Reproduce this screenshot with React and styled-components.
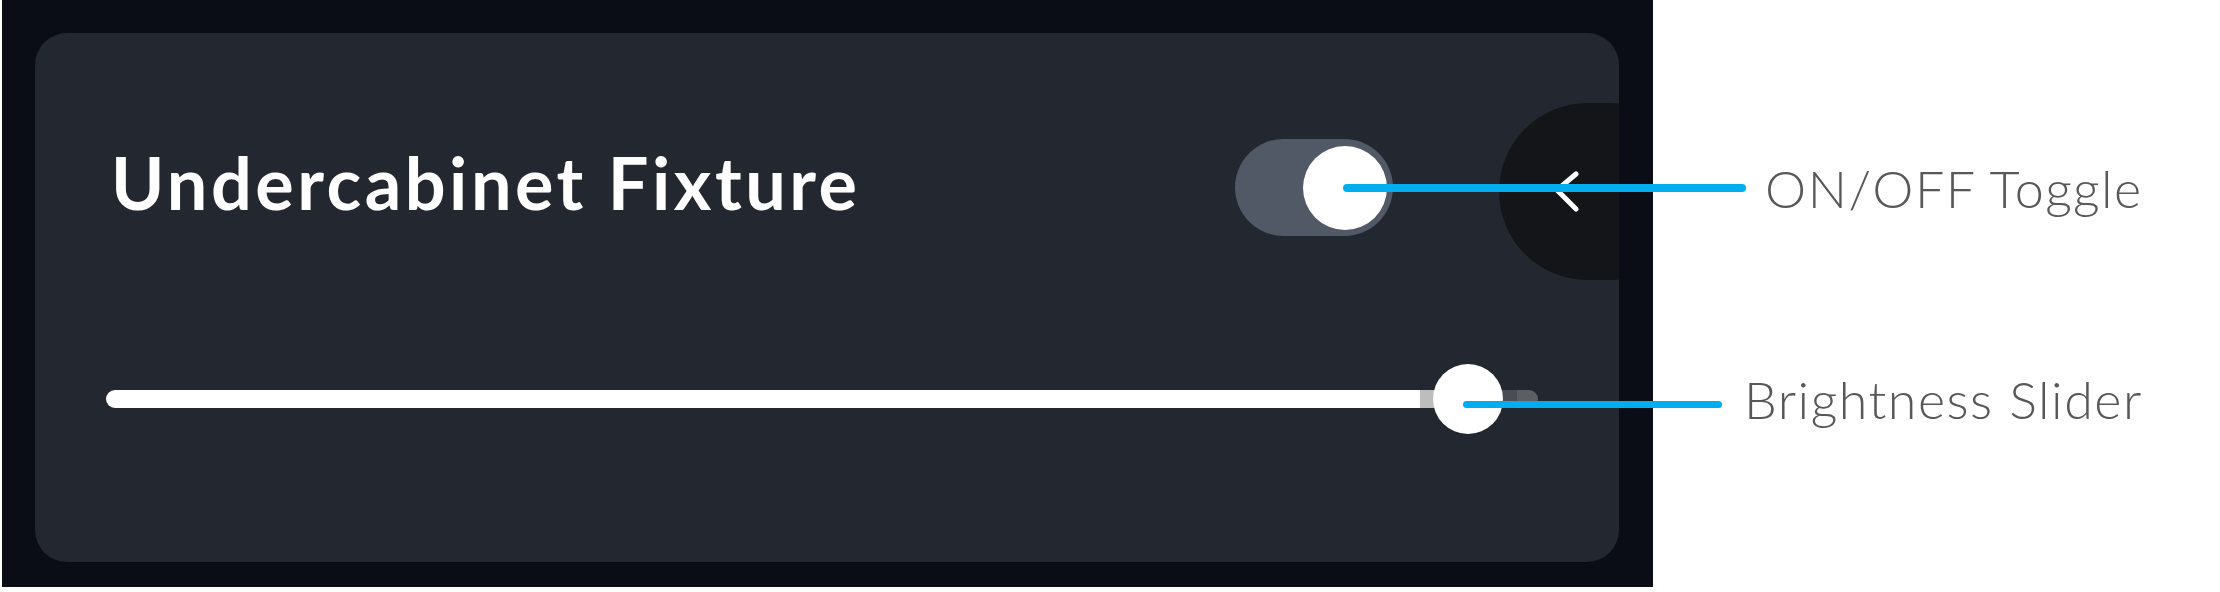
import React from 'react';
import styled, { createGlobalStyle } from 'styled-components';

const GlobalStyle = createGlobalStyle`
  html, body {
    margin: 0;
    padding: 0;
    background: #ffffff;
  }
  * {
    box-sizing: border-box;
  }
`;

export default function App() {
  const value = 0.951;

  return (
    <Page>
      <GlobalStyle />
      <Screen>
        <Card>
          <Header>
            <Title>Undercabinet Fixture</Title>
            <Toggle $on>
              <Knob />
            </Toggle>
          </Header>
          <SliderRow>
            <Track>
              <Thumb style={{ left: `${value * 100}%` }} />
            </Track>
          </SliderRow>
          <BackTab>
            <svg width="28" height="44" viewBox="0 0 28 44" fill="none">
              <polyline
                points="22,4 3,20 22,39"
                stroke="#ffffff"
                strokeWidth="5"
                strokeLinecap="round"
                strokeLinejoin="round"
              />
            </svg>
          </BackTab>
        </Card>
      </Screen>

      <Callout $top={163} $left={1343} $gap={19}>
        <Leader $width={403} $thick={8} />
        <Label>ON/OFF Toggle</Label>
      </Callout>
      <Callout $top={379} $left={1463} $gap={22}>
        <Leader $width={259} $thick={7} />
        <Label $lift={5}>Brightness Slider</Label>
      </Callout>
    </Page>
  );
}

const Page = styled.div`
  position: relative;
  display: flex;
  width: 2220px;
  height: 592px;
  background: #ffffff;
  overflow: hidden;
`;

const Screen = styled.div`
  display: flex;
  width: 1651px;
  height: 587px;
  margin-left: 2px;
  padding: 33px 34px 25px 33px;
  background: #0a0d15;
`;

const Card = styled.div`
  position: relative;
  flex: 1;
  display: flex;
  flex-direction: column;
  background: #23272f;
  border-radius: 32px;
  overflow: hidden;
`;

const Header = styled.div`
  display: flex;
  align-items: center;
  height: 97px;
  margin-top: 106px;
  padding: 0 226px 0 76px;
`;

const Title = styled.h1`
  flex: 1;
  margin: 0;
  padding-bottom: 12px;
  font-family: 'Lato', 'Liberation Sans', sans-serif;
  font-weight: 700;
  font-size: 72px;
  line-height: 1;
  letter-spacing: 3.5px;
  color: #ffffff;
`;

const Toggle = styled.div`
  display: flex;
  align-items: center;
  justify-content: ${(p) => (p.$on ? 'flex-end' : 'flex-start')};
  width: 158px;
  height: 97px;
  padding: 0 6px;
  border-radius: 49px;
  background: #525966;
`;

const Knob = styled.div`
  width: 84px;
  height: 84px;
  border-radius: 50%;
  background: #ffffff;
`;

const SliderRow = styled.div`
  display: flex;
  align-items: center;
  height: 70px;
  margin-top: 128px;
  padding: 0 81px 0 71px;
`;

const Track = styled.div`
  position: relative;
  flex: 1;
  height: 18px;
  border-radius: 9px;
  background: linear-gradient(
    to right,
    #ffffff 0,
    #ffffff 1314px,
    #bdbdbd 1314px,
    #bdbdbd 1328px,
    #4a4d54 1328px,
    #4a4d54 1411px,
    #5b5e63 1411px
  );
`;

const Thumb = styled.div`
  position: absolute;
  top: 50%;
  width: 70px;
  height: 70px;
  border-radius: 50%;
  background: #ffffff;
  transform: translate(-50%, -50%);
`;

const BackTab = styled.div`
  position: absolute;
  top: 70px;
  right: -80px;
  display: flex;
  align-items: center;
  width: 200px;
  height: 177px;
  padding-left: 55px;
  border-radius: 89px;
  background: #141518;
`;

const Callout = styled.div`
  position: absolute;
  top: ${(p) => p.$top}px;
  left: ${(p) => p.$left}px;
  display: flex;
  align-items: center;
  gap: ${(p) => p.$gap}px;
  height: 50px;
`;

const Leader = styled.div`
  width: ${(p) => p.$width}px;
  height: ${(p) => p.$thick}px;
  border-radius: ${(p) => p.$thick / 2}px;
  background: #00aeef;
`;

const Label = styled.span`
  padding-bottom: ${(p) => (p.$lift || 0) * 2}px;
  font-family: 'Lato', 'Liberation Sans', sans-serif;
  font-weight: 300;
  font-size: 52px;
  line-height: 1;
  letter-spacing: 1.5px;
  color: #58585a;
  white-space: nowrap;
`;
